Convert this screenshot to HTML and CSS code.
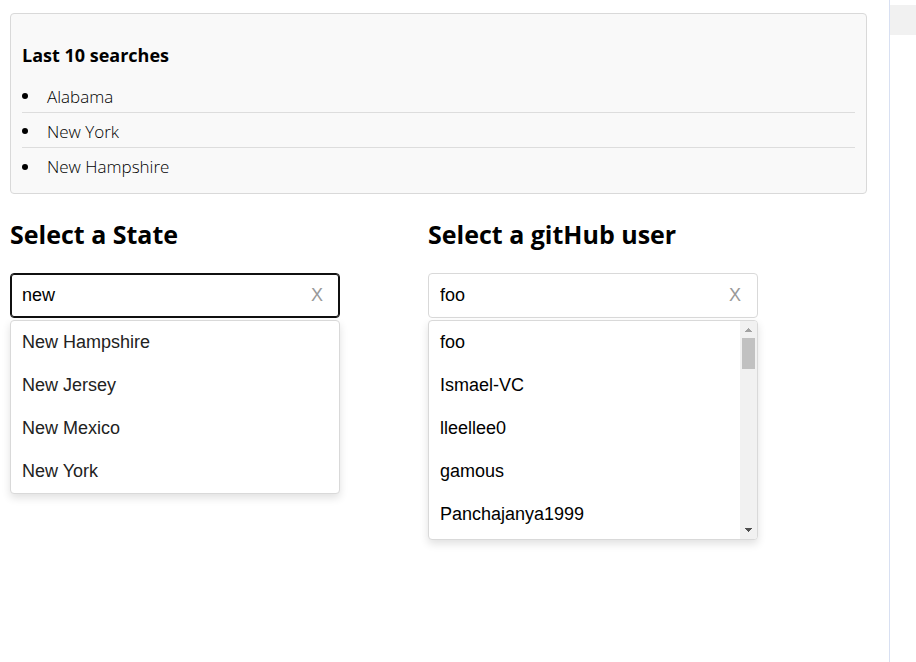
FILE: index.html
```html
<!DOCTYPE html>
<html lang="en">
<head>
  <meta charset="utf-8">
  <title>Autocomplete</title>
  <link rel="stylesheet" href="styles.css">
</head>
<body>
  <main class="content">
    <section class="history">
      <h3 class="history-title">Last 10 searches</h3>
      <ul class="history-list">
        <li class="history-item">Alabama</li>
        <li class="history-item">New York</li>
        <li class="history-item">New Hampshire</li>
      </ul>
    </section>

    <div class="pickers">
      <section class="picker">
        <h2 class="picker-title"><label for="state">Select a State</label></h2>
        <div class="field field-active">
          <input class="field-input" id="state" type="text" value="new" autocomplete="off">
          <button class="field-clear" type="button" aria-label="Clear state">X</button>
        </div>
        <div class="dropdown">
          <ul class="options">
            <li class="option option-soft">New Hampshire</li>
            <li class="option option-soft">New Jersey</li>
            <li class="option option-soft">New Mexico</li>
            <li class="option option-soft">New York</li>
          </ul>
        </div>
      </section>

      <section class="picker">
        <h2 class="picker-title"><label for="user">Select a gitHub user</label></h2>
        <div class="field">
          <input class="field-input" id="user" type="text" value="foo" autocomplete="off">
          <button class="field-clear" type="button" aria-label="Clear user">X</button>
        </div>
        <div class="dropdown dropdown-scroll">
          <ul class="options">
            <li class="option">foo</li>
            <li class="option">Ismael-VC</li>
            <li class="option">lleellee0</li>
            <li class="option">gamous</li>
            <li class="option">Panchajanya1999</li>
          </ul>
          <div class="scrollbar" aria-hidden="true">
            <svg class="scroll-arrow" viewBox="0 0 17 17" shape-rendering="crispEdges"><path d="M8 7h1v1h1v1h1v1h1v1H5v-1h1V9h1V8h1z" fill="#a3a3a3"/></svg>
            <div class="scroll-thumb"></div>
            <svg class="scroll-arrow scroll-down" viewBox="0 0 17 17" shape-rendering="crispEdges"><path d="M5 6h7v1h-1v1h-1v1H9v1H8V9H7V8H6V7H5z" fill="#505050"/></svg>
          </div>
        </div>
      </section>
    </div>
  </main>
  <aside class="side">
    <div class="side-block"></div>
  </aside>
</body>
</html>
```
FILE: styles.css
```css
* {
  box-sizing: border-box;
}

body {
  display: flex;
  min-height: 100vh;
  margin: 0;
  background: #fff;
  color: #000;
  font-family: "Segoe UI", "Open Sans", sans-serif;
  font-size: 17px;
}

h2,
h3,
ul {
  margin: 0;
  padding: 0;
}

.content {
  flex: 1;
  padding: 13px 22px 0 10px;
}

.history {
  padding: 28px 11px 9px;
  border: 1px solid #d9d9d9;
  border-radius: 4px;
  background: #f9f9f9;
}

.history-title {
  margin-bottom: 10px;
  font-size: 18px;
  line-height: 26px;
}

.history-list {
  padding-bottom: 1px;
  list-style: none;
}

.history-item {
  display: flex;
  align-items: center;
  height: 35px;
  padding-top: 2px;
  border-bottom: 1px solid #ddd;
  font-weight: 350;
}

.history-item::before {
  width: 6px;
  height: 6px;
  margin-right: 19px;
  border-radius: 50%;
  background: #000;
  content: "";
}

.history-item:last-child {
  border-bottom: 0;
}

.pickers {
  display: flex;
  flex-wrap: wrap;
  align-items: flex-start;
  gap: 24px 88px;
  padding-top: 23px;
}

.picker {
  flex: 0 1 330px;
}

.picker-title {
  margin-bottom: 21px;
  font-size: 25px;
  line-height: 35px;
}

.field {
  display: flex;
  height: 45px;
  border: 1px solid #d9d9d9;
  border-radius: 4px;
  background: #fff;
}

.field-active {
  border-color: #101010;
  box-shadow: inset 0 0 0 1px #101010;
}

.field-input {
  flex: 1;
  min-width: 0;
  padding: 0 0 0 11px;
  border: 0;
  outline: 0;
  background: transparent;
  color: #000;
  font: 18px "Liberation Sans", Arial, sans-serif;
}

.field-clear {
  width: 44px;
  padding: 0;
  border: 0;
  background: transparent;
  color: #999;
  font: 18px "Liberation Sans", Arial, sans-serif;
}

.dropdown {
  display: flex;
  margin-top: 2px;
  overflow: hidden;
  border: 1px solid #d9d9d9;
  border-radius: 4px;
  background: #fff;
  box-shadow: 0 4px 8px rgba(0, 0, 0, 0.12);
}

.dropdown-scroll {
  max-height: 220px;
}

.options {
  flex: 1;
  list-style: none;
}

.option {
  padding: 11px;
  font: 18px/21px "Liberation Sans", Arial, sans-serif;
}

.option-soft {
  color: #222;
}

.dropdown-scroll .options {
  padding-bottom: 3px;
}

.scrollbar {
  display: flex;
  flex-direction: column;
  width: 17px;
  background: #f1f1f1;
}

.scroll-arrow {
  width: 17px;
  height: 17px;
}

.scroll-thumb {
  height: 31px;
  margin: 0 2px;
  background: #c1c1c1;
}

.scroll-down {
  margin-top: auto;
}

.side {
  width: 27px;
  padding-top: 5px;
  border-left: 1px solid #d8e0f2;
}

.side-block {
  height: 30px;
  background: #f1f1f1;
}
```
